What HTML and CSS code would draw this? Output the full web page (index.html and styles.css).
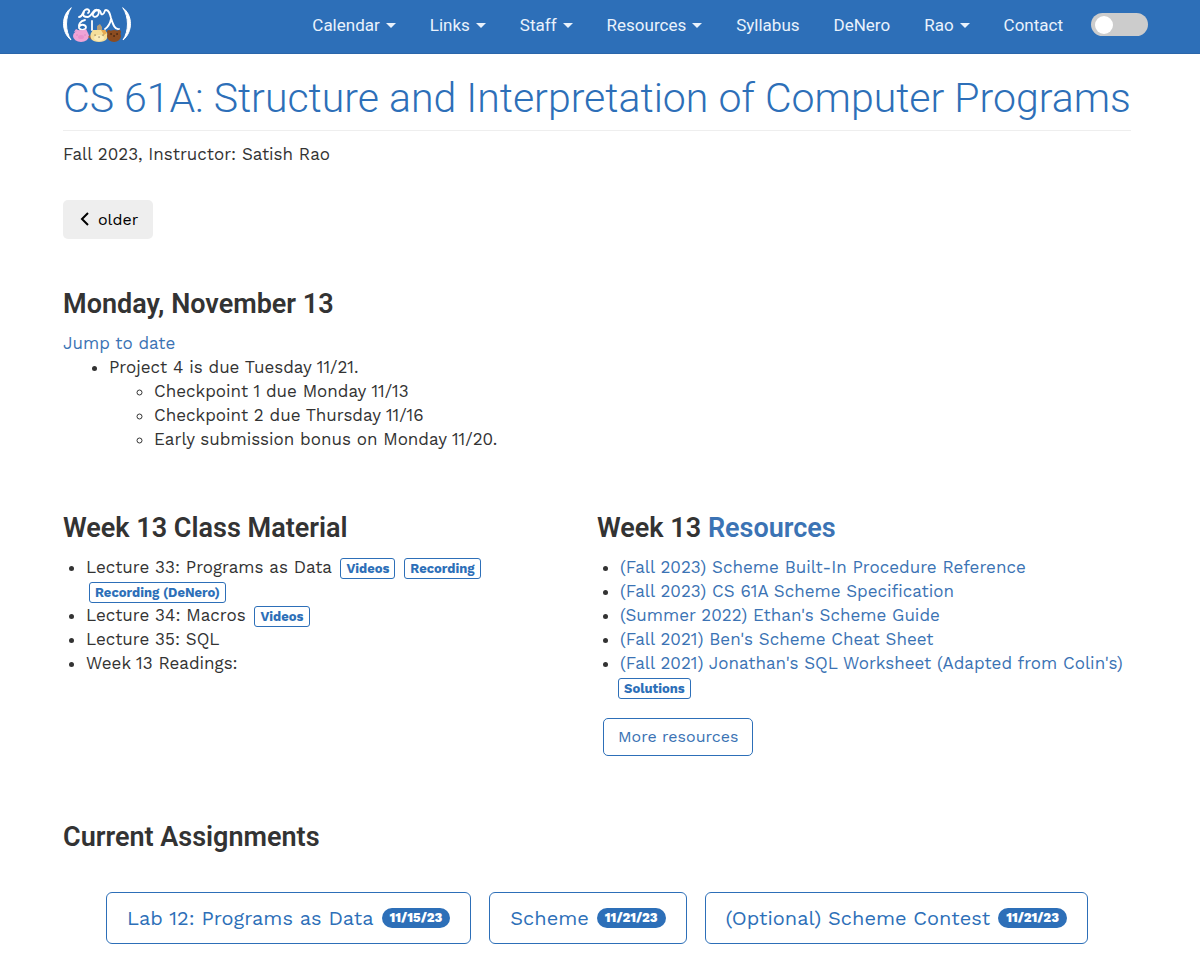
FILE: index.html
```html
<!DOCTYPE html>
<html lang="en">
<head>
<meta charset="utf-8">
<meta name="viewport" content="width=device-width, initial-scale=1">
<title>CS 61A: Structure and Interpretation of Computer Programs</title>
<link rel="stylesheet" href="styles.css">
</head>
<body>
<header class="navbar">
  <a class="logo" href="#" aria-label="CS 61A home">
    <svg width="70" height="40" viewBox="0 0 70 40" fill="none" stroke-linecap="round" stroke-linejoin="round">
      <path d="M9 4C-1 11-1 28 9 36C3 27 3 13 9 4Z" fill="#fff" stroke="#fff"/>
      <path d="M61 4C71 11 71 28 61 36C67 27 67 13 61 4Z" fill="#fff" stroke="#fff"/>
      <g stroke="#fff" stroke-width="1.8">
        <path d="M17 13C21 13 20 8 23 6C26 4 29 7 26 9M22 8C20 12 22 13 26 13C29 13 30 8 33 6C36 5 38 8 36 11C34 14 30 13 31 10C32 7 34 6 37 6C40 7 38 12 41 10C43 9 42 6 44 6C47 6 48 10 49 14C51 21 53 26 57 25M49 15C48 20 46 23 43 25"/>
        <path d="M23 16C18 17 16 21 17 24C19 27 24 26 24 23C23 20 18 20 17 23M30 17V26"/>
      </g>
      <path d="M35 22L38 20L40 23V28H35Z" fill="#b49c78"/>
      <g fill="#efa3d6">
        <path d="M12 28L14 25L18 27ZM20 27L24 25L26 29Z"/>
        <ellipse cx="19" cy="32" rx="8" ry="6"/>
      </g>
      <ellipse cx="19" cy="33" rx="3" ry="2" fill="#e892cd"/>
      <path d="M15 31h.1M23 31h.1" stroke="#c078a8"/>
      <path d="M26 33L28 31L31 34L30 36Z" fill="#9b6542"/>
      <path d="M29 29L31 26L35 26H39L43 26L45 29C47 34 44 38 37 38C30 38 27 34 29 29Z" fill="#f6df9a"/>
      <path d="M39 26L43 26L45 29L42 31Z" fill="#e8a94f"/>
      <ellipse cx="37" cy="34" rx="5" ry="3" fill="#fbedbb"/>
      <path d="M33 31h.1M41 31h.1M37 33h.1" stroke="#4b3826" stroke-width="1.2"/>
      <g fill="#8b4c20">
        <circle cx="47" cy="28" r="2"/><circle cx="57" cy="28" r="2"/>
        <ellipse cx="52" cy="32" rx="7" ry="6"/>
      </g>
      <path d="M49 30h.1M55 30h.1M52 32h.1" stroke="#24140b" stroke-width="1.5"/>
    </svg>
  </a>
  <nav class="menu" aria-label="Main">
    <a href="#">Calendar<span class="caret"></span></a>
    <a href="#">Links<span class="caret"></span></a>
    <a href="#">Staff<span class="caret"></span></a>
    <a href="#">Resources<span class="caret"></span></a>
    <a href="#">Syllabus</a>
    <a href="#">DeNero</a>
    <a href="#">Rao<span class="caret"></span></a>
    <a href="#">Contact</a>
    <input class="toggle" type="checkbox" role="switch" aria-label="Dark mode">
  </nav>
</header>
<main class="page">
  <h1>CS 61A: Structure and Interpretation of Computer Programs</h1>
  <p class="subtitle">Fall 2023, Instructor: Satish Rao</p>
  <button class="older" type="button">
    <svg width="12" height="16" viewBox="0 0 12 16" fill="none" stroke="#000" stroke-width="2" aria-hidden="true"><path d="M10 1L4 7L10 13"/></svg>
    older
  </button>

  <section class="announcements">
    <h2>Monday, November 13</h2>
    <a href="#">Jump to date</a>
    <ul class="outline">
      <li>Project 4 is due Tuesday 11/21.
        <ul>
          <li>Checkpoint 1 due Monday 11/13</li>
          <li>Checkpoint 2 due Thursday 11/16</li>
          <li>Early submission bonus on Monday 11/20.</li>
        </ul>
      </li>
    </ul>
  </section>

  <div class="columns">
    <section>
      <h2>Week 13 Class Material</h2>
      <ul class="items">
        <li>Lecture 33: Programs as Data <a class="tag" href="#">Videos</a> <a class="tag" href="#">Recording</a> <a class="tag" href="#">Recording (DeNero)</a></li>
        <li>Lecture 34: Macros <a class="tag" href="#">Videos</a></li>
        <li>Lecture 35: SQL</li>
        <li>Week 13 Readings:</li>
      </ul>
    </section>
    <section>
      <h2>Week 13 <a href="#">Resources</a></h2>
      <ul class="items">
        <li><a href="#">(Fall 2023) Scheme Built-In Procedure Reference</a></li>
        <li><a href="#">(Fall 2023) CS 61A Scheme Specification</a></li>
        <li><a href="#">(Summer 2022) Ethan's Scheme Guide</a></li>
        <li><a href="#">(Fall 2021) Ben's Scheme Cheat Sheet</a></li>
        <li><a href="#">(Fall 2021) Jonathan's SQL Worksheet (Adapted from Colin's)</a> <a class="tag tag-flush" href="#">Solutions</a></li>
      </ul>
      <a class="more" href="#">More resources</a>
    </section>
  </div>

  <section class="assignments">
    <h2>Current Assignments</h2>
    <div class="cards">
      <a class="card" href="#">Lab 12: Programs as Data <span class="due">11/15/23</span></a>
      <a class="card" href="#">Scheme <span class="due">11/21/23</span></a>
      <a class="card" href="#">(Optional) Scheme Contest <span class="due">11/21/23</span></a>
    </div>
  </section>
</main>
</body>
</html>
```
FILE: styles.css
```css
* { box-sizing: border-box; }

body {
  margin: 0;
  background: #fff;
  color: #333;
  font: 17px/24px "Work Sans", Inter, sans-serif;
}

a { color: #3b73b4; text-decoration: none; }
ul, h1, h2, p { margin: 0; }

.navbar {
  display: flex;
  justify-content: space-between;
  align-items: flex-start;
  padding: 4px 52px 8px 62px;
  background: #2d6fb8;
  border-bottom: 1px solid #2a66aa;
}
.logo svg { display: block; }
.menu {
  display: flex;
  align-items: center;
  gap: 34px;
  height: 41px;
  font-family: Roboto, sans-serif;
}
.menu a { display: flex; align-items: center; gap: 6px; color: #e9f2fc; }
.caret {
  margin-top: 2px;
  border: 5px solid transparent;
  border-top-color: currentColor;
  border-bottom: 0;
}
.toggle {
  appearance: none;
  display: flex;
  align-items: center;
  width: 57px;
  height: 23px;
  margin: 0 0 0 -6px;
  padding: 0 4px;
  border-radius: 12px;
  background: #ccc;
}
.toggle::before {
  content: "";
  width: 18px;
  height: 18px;
  border-radius: 50%;
  background: #fff;
}
.toggle:checked { justify-content: flex-end; }

.page { padding: 20px 69px 30px 63px; }

h1 {
  padding-bottom: 8px;
  border-bottom: 1px solid #eee;
  color: #2d6fb8;
  font: 300 41px/48px Roboto, sans-serif;
}
h2 { font: 600 27px/32px Roboto, sans-serif; margin-bottom: 11px; }

.subtitle { margin-top: 11px; }
.older {
  display: flex;
  align-items: center;
  gap: 8px;
  height: 39px;
  margin-top: 34px;
  padding: 0 15px;
  border: 0;
  border-radius: 5px;
  background: #eee;
  color: #000;
  font-family: inherit;
  font-size: 16px;
}

.announcements { margin-top: 49px; }
.outline { padding-left: 46px; }
.outline ul { padding-left: 45px; }

.columns {
  display: grid;
  grid-template-columns: 1fr 1fr;
  margin-top: 61px;
}
.items { padding-left: 23px; }
.tag {
  margin-left: 3px;
  padding: 2px 5px;
  border: 1px solid #2d6fb8;
  border-radius: 3px;
  color: #2d6fb8;
  font-size: 13px;
  font-weight: 700;
  line-height: 16px;
  white-space: nowrap;
}
.tag-flush { margin-left: -2px; }
.more {
  display: inline-block;
  margin: 19px 0 0 6px;
  padding: 6px 14px;
  border: 1px solid #2d6fb8;
  border-radius: 5px;
  font-size: 16px;
}

.assignments { margin-top: 65px; }
.cards {
  display: flex;
  flex-wrap: wrap;
  justify-content: center;
  gap: 18px;
  margin-top: 39px;
}
.card {
  display: flex;
  align-items: center;
  gap: 8px;
  height: 52px;
  padding: 0 20px;
  border: 1px solid #2d6fb8;
  border-radius: 6px;
  color: #2d6fb8;
  font-size: 20px;
}
.due {
  padding: 2px 8px;
  border-radius: 10px;
  background: #2d6fb8;
  color: #fff;
  font-size: 13px;
  font-weight: 800;
  line-height: 16px;
}
```
